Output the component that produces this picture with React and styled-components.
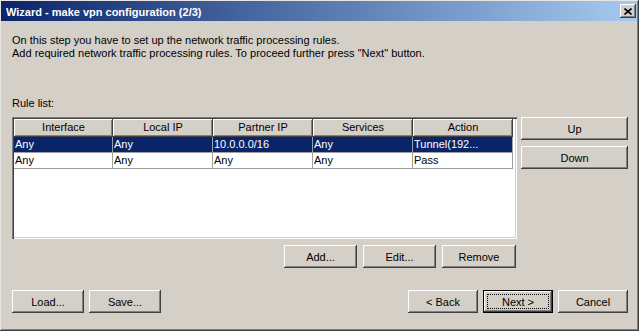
import React from 'react';
import styled, { createGlobalStyle, css } from 'styled-components';

const GlobalStyle = createGlobalStyle`
  html, body {
    margin: 0;
    padding: 0;
    background: #d4d0c8;
  }
  body {
    font-family: "Liberation Sans", Arial, sans-serif;
    font-size: 11px;
    color: #000;
  }
`;

const raised = css`
  box-shadow: inset -1px -1px #404040, inset 1px 1px #ffffff,
    inset -2px -2px #808080, inset 2px 2px #d4d0c8;
`;

const Window = styled.div`
  box-sizing: border-box;
  width: 639px;
  height: 331px;
  background: #d4d0c8;
  padding: 1px 2px 2px 1px;
  box-shadow: inset -1px -1px #404040, inset 1px 1px #e8e6e2, inset -2px -2px #808080;
  display: flex;
  flex-direction: column;
`;

const TitleBar = styled.div`
  height: 20px;
  flex-shrink: 0;
  display: flex;
  align-items: center;
  justify-content: space-between;
  padding: 0 1px 0 5px;
  background: linear-gradient(to right, #0a246a, #a6caf0);
  color: #fff;
  font-weight: bold;
  font-size: 11px;
`;

const Title = styled.span`
  padding-top: 2px;
`;

const CloseButton = styled.div`
  width: 16px;
  height: 14px;
  background: #d4d0c8;
  display: flex;
  align-items: center;
  justify-content: center;
  ${raised}
`;

const Content = styled.div`
  flex: 1;
  display: flex;
  flex-direction: column;
  padding: 13px 9px 0 11px;
`;

const Intro = styled.p`
  margin: 0;
  line-height: 13px;
`;

const Label = styled.div`
  margin-top: 37px;
  line-height: 13px;
`;

const MainRow = styled.div`
  margin-top: 7px;
  display: flex;
  gap: 4px;
`;

const ListFrame = styled.div`
  box-sizing: border-box;
  width: 505px;
  height: 122px;
  padding: 2px;
  background: #fff;
  box-shadow: inset 1px 1px #808080, inset 2px 2px #404040,
    inset -1px -1px #ffffff, inset -2px -2px #d4d0c8;
`;

const HeaderRow = styled.div`
  display: flex;
  height: 18px;
`;

const HeaderCell = styled.div`
  box-sizing: border-box;
  width: ${p => p.$w}px;
  background: #d4d0c8;
  text-align: center;
  line-height: 17px;
  ${raised}
`;

const Row = styled.div`
  display: flex;
  height: 16px;
  background: ${p => (p.$selected ? '#0a246a' : '#fff')};
  color: ${p => (p.$selected ? '#fff' : '#000')};
  width: 499px;
`;

const Cell = styled.div`
  box-sizing: border-box;
  width: ${p => p.$w}px;
  padding-left: 1px;
  line-height: 15px;
  border-right: 1px solid #a0a0a0;
  border-bottom: 1px solid #a0a0a0;
  white-space: nowrap;
  overflow: hidden;
`;

const SideColumn = styled.div`
  display: flex;
  flex-direction: column;
  gap: 6px;
`;

const Button = styled.div`
  position: relative;
  box-sizing: border-box;
  width: ${p => p.$w || 70}px;
  height: 23px;
  background: #d4d0c8;
  display: flex;
  align-items: center;
  justify-content: center;
  ${p =>
    p.$default
      ? css`
          box-shadow: inset 0 0 0 1px #000, inset -2px -2px #404040,
            inset 2px 2px #ffffff, inset -3px -3px #808080;
          &::after {
            content: '';
            position: absolute;
            inset: 4px;
            border: 1px dotted #000;
          }
        `
      : raised}
`;

const ActionRow = styled.div`
  margin-top: 6px;
  width: 504px;
  display: flex;
  justify-content: flex-end;
  gap: 6px;
`;

const Footer = styled.div`
  margin-top: 22px;
  display: flex;
  justify-content: space-between;
`;

const Group = styled.div`
  display: flex;
  gap: ${p => p.$gap || 5}px;
`;

const columns = [
  { title: 'Interface', w: 99 },
  { title: 'Local IP', w: 100 },
  { title: 'Partner IP', w: 100 },
  { title: 'Services', w: 100 },
  { title: 'Action', w: 100 },
];

const rules = [
  ['Any', 'Any', '10.0.0.0/16', 'Any', 'Tunnel(192...'],
  ['Any', 'Any', 'Any', 'Any', 'Pass'],
];

const App = () => {
  return (
    <>
      <GlobalStyle />
      <Window>
        <TitleBar>
          <Title>Wizard - make vpn configuration (2/3)</Title>
          <CloseButton>
            <svg width="8" height="7" viewBox="0 0 8 7">
              <path d="M0.5 0.5 L7.5 6.5 M7.5 0.5 L0.5 6.5" stroke="#000" strokeWidth="1.6" />
            </svg>
          </CloseButton>
        </TitleBar>
        <Content>
          <Intro>
            On this step you have to set up the network traffic processing rules.
            <br />
            Add required network traffic processing rules. To proceed further press "Next" button.
          </Intro>
          <Label>Rule list:</Label>
          <MainRow>
            <ListFrame>
              <HeaderRow>
                {columns.map(c => (
                  <HeaderCell key={c.title} $w={c.w}>{c.title}</HeaderCell>
                ))}
              </HeaderRow>
              {rules.map((r, i) => (
                <Row key={i} $selected={i === 0}>
                  {r.map((v, j) => (
                    <Cell key={j} $w={columns[j].w}>{v}</Cell>
                  ))}
                </Row>
              ))}
            </ListFrame>
            <SideColumn>
              <Button $w={107}>Up</Button>
              <Button $w={107}>Down</Button>
            </SideColumn>
          </MainRow>
          <ActionRow>
            <Button $w={73}>Add...</Button>
            <Button $w={73}>Edit...</Button>
            <Button $w={74}>Remove</Button>
          </ActionRow>
          <Footer>
            <Group>
              <Button $w={72}>Load...</Button>
              <Button $w={72}>Save...</Button>
            </Group>
            <Group>
              <Button>&lt; Back</Button>
              <Button $default>Next &gt;</Button>
              <Button>Cancel</Button>
            </Group>
          </Footer>
        </Content>
      </Window>
    </>
  );
};

export default App;
